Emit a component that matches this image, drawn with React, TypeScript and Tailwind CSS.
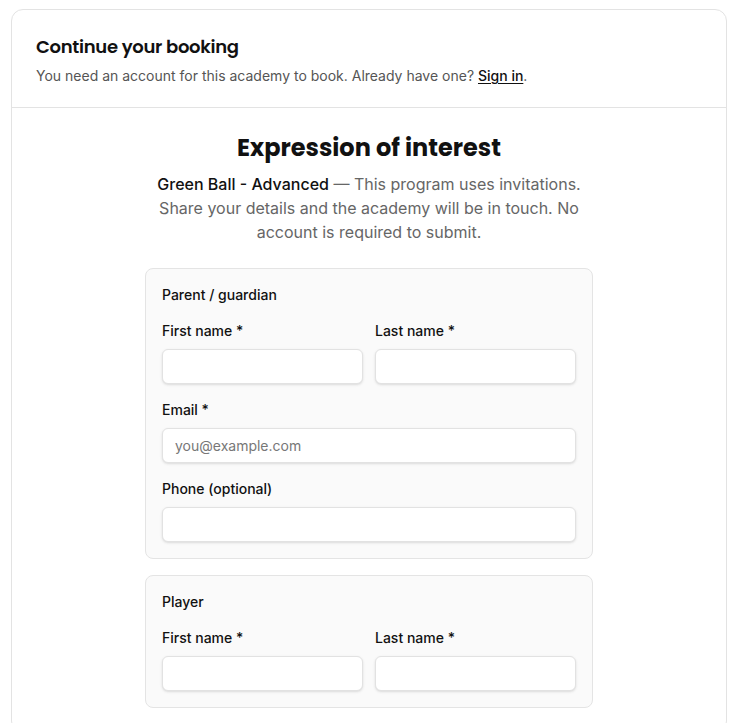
import React from 'react';

const heading = { fontFamily: '"Poppins", "Inter", "Liberation Sans", sans-serif' };

const Field: React.FC<{ label: string; placeholder?: string }> = ({ label, placeholder }) => (
  <div className="flex flex-col">
    <label className="text-[14px] font-medium leading-5 text-[#111]">{label}</label>
    <input
      placeholder={placeholder}
      className="mt-2 h-[35px] w-full rounded-md border border-[#e2e2e2] bg-white px-3 text-[14px] text-[#111] shadow-sm outline-none placeholder:text-[#777]"
    />
  </div>
);

const Section: React.FC<{ title: string; children: React.ReactNode }> = ({ title, children }) => (
  <div className="rounded-lg border border-[#e4e4e4] bg-[#fafafa] p-4">
    <p className="mb-4 text-[14px] font-medium leading-5 text-[#111]">{title}</p>
    <div className="flex flex-col gap-4">{children}</div>
  </div>
);

export default function App() {
  return (
    <div className="min-h-screen bg-white pl-[11px] pr-[15px] pt-[9px]" style={{ fontFamily: 'Inter, "Liberation Sans", sans-serif' }}>
      <div className="rounded-xl border border-[#e3e3e3] bg-white">
        {/* header */}
        <div className="border-b border-[#e3e3e3] px-6 pb-[21px] pt-[25px]">
          <h1 className="text-[18px] font-semibold leading-6 tracking-[-0.3px] text-[#111]" style={heading}>
            Continue your booking
          </h1>
          <p className="mt-[7px] text-[14px] leading-5 text-[#555]">
            You need an account for this academy to book. Already have one?{' '}
            <a className="font-medium text-[#111] underline underline-offset-2">Sign in</a>.
          </p>
        </div>

        {/* body */}
        <div className="px-6 pt-[24px] pb-6">
          <h2 className="text-center text-[24px] font-bold leading-8 text-[#111]" style={heading}>
            Expression of interest
          </h2>
          <p className="mx-auto mt-[8px] max-w-[440px] text-center text-[16px] leading-6 text-[#666]">
            <span className="font-medium text-[#111]">Green Ball - Advanced</span> — This program uses invitations.
            Share your details and the academy will be in touch. No account is required to submit.
          </p>

          <div className="mx-auto mt-[24px] flex w-[448px] flex-col gap-4">
            <Section title="Parent / guardian">
              <div className="grid grid-cols-2 gap-3">
                <Field label="First name *" />
                <Field label="Last name *" />
              </div>
              <Field label="Email *" placeholder="you@example.com" />
              <Field label="Phone (optional)" />
            </Section>
            <Section title="Player">
              <div className="grid grid-cols-2 gap-3">
                <Field label="First name *" />
                <Field label="Last name *" />
              </div>
            </Section>
          </div>
        </div>
      </div>
    </div>
  );
}
